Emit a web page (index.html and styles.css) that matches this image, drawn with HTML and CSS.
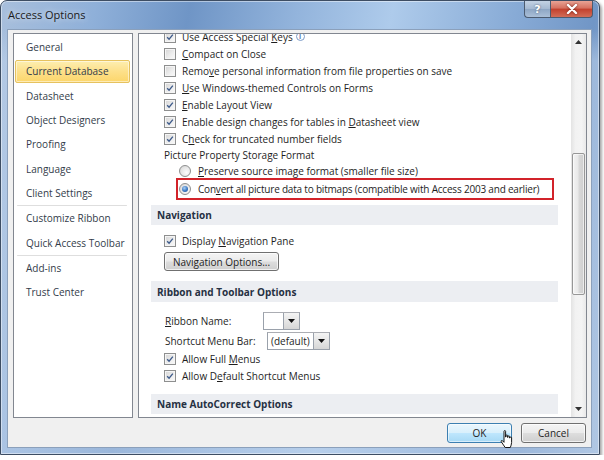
FILE: index.html
```html
<!DOCTYPE html>
<html>
<head>
<meta charset="utf-8">
<title>Access Options</title>
<link rel="stylesheet" href="styles.css">
</head>
<body>
<div class="window">
  <div class="titlebar">
    <span class="title">Access Options</span>
    <div class="caption-btns">
      <div class="cap help">?</div>
      <div class="cap close">
        <svg width="12" height="10" viewBox="0 0 12 10"><path d="M2 1 L10 9 M10 1 L2 9" stroke="#fff" stroke-width="2.4" stroke-linecap="round"/></svg>
      </div>
    </div>
  </div>
  <div class="client">
    <div class="main">
      <ul class="nav">
        <li>General</li>
        <li class="sel">Current Database</li>
        <li>Datasheet</li>
        <li>Object Designers</li>
        <li>Proofing</li>
        <li>Language</li>
        <li>Client Settings</li>
        <li class="sep"></li>
        <li>Customize Ribbon</li>
        <li>Quick Access Toolbar</li>
        <li class="sep"></li>
        <li>Add-ins</li>
        <li>Trust Center</li>
      </ul>
      <div class="panel">
        <div class="scroll">
          <div class="inner">
            <div class="row"><span class="cb on"><svg viewBox="0 0 12 12"><path d="M2.6 6.2 L4.9 8.6 L9.4 3.2"/></svg></span><span>Use Access Special <u>K</u>eys</span><span class="info">i</span></div>
            <div class="row"><span class="cb"></span><span><u>C</u>ompact on Close</span></div>
            <div class="row"><span class="cb"></span><span>Remo<u>v</u>e personal information from file properties on save</span></div>
            <div class="row"><span class="cb on"><svg viewBox="0 0 12 12"><path d="M2.6 6.2 L4.9 8.6 L9.4 3.2"/></svg></span><span><u>U</u>se Windows-themed Controls on Forms</span></div>
            <div class="row"><span class="cb on"><svg viewBox="0 0 12 12"><path d="M2.6 6.2 L4.9 8.6 L9.4 3.2"/></svg></span><span><u>E</u>nable Layout View</span></div>
            <div class="row"><span class="cb on"><svg viewBox="0 0 12 12"><path d="M2.6 6.2 L4.9 8.6 L9.4 3.2"/></svg></span><span>Enable design changes for tables in <u>D</u>atasheet view</span></div>
            <div class="row"><span class="cb on"><svg viewBox="0 0 12 12"><path d="M2.6 6.2 L4.9 8.6 L9.4 3.2"/></svg></span><span>C<u>h</u>eck for truncated number fields</span></div>
            <div class="label">Picture Property Storage Format</div>
            <div class="row radio-row"><span class="rb"></span><span><u>P</u>reserve source image format (smaller file size)</span></div>
            <div class="highlight">
              <div class="row radio-row in-box"><span class="rb on"></span><span class="tight">Con<u>v</u>ert all picture data to bitmaps (compatible with Access 2003 and earlier)</span></div>
            </div>

            <div class="section nav-sec">Navigation</div>
            <div class="row sec-first"><span class="cb on"><svg viewBox="0 0 12 12"><path d="M2.6 6.2 L4.9 8.6 L9.4 3.2"/></svg></span><span>Display <u>N</u>avigation Pane</span></div>
            <button class="btn navopt">Navigation Options...</button>

            <div class="section ribbon-sec">Ribbon and Toolbar Options</div>
            <div class="combo-row first-combo">
              <span class="clabel rn"><u>R</u>ibbon Name:</span>
              <span class="combo"><span class="cfield narrow"></span><span class="cdrop"><svg width="7" height="4" viewBox="0 0 7 4"><path d="M0 0 H7 L3.5 4 Z" fill="#111"/></svg></span></span>
            </div>
            <div class="combo-row">
              <span class="clabel sm">Shortcut Menu Bar:</span>
              <span class="combo"><span class="cfield">(default)</span><span class="cdrop"><svg width="7" height="4" viewBox="0 0 7 4"><path d="M0 0 H7 L3.5 4 Z" fill="#111"/></svg></span></span>
            </div>
            <div class="row"><span class="cb on"><svg viewBox="0 0 12 12"><path d="M2.6 6.2 L4.9 8.6 L9.4 3.2"/></svg></span><span>Allow Full <u>M</u>enus</span></div>
            <div class="row"><span class="cb on"><svg viewBox="0 0 12 12"><path d="M2.6 6.2 L4.9 8.6 L9.4 3.2"/></svg></span><span>Allow D<u>e</u>fault Shortcut Menus</span></div>

            <div class="section auto-sec">Name AutoCorrect Options</div>
          </div>
        </div>
        <div class="vscroll">
          <div class="arrow"><svg width="7" height="4" viewBox="0 0 7 4"><path d="M0 4 H7 L3.5 0 Z" fill="#333"/></svg></div>
          <div class="track"><div class="thumb"></div></div>
          <div class="arrow"><svg width="7" height="4" viewBox="0 0 7 4"><path d="M0 0 H7 L3.5 4 Z" fill="#333"/></svg></div>
        </div>
      </div>
    </div>
    <div class="footer">
      <button class="btn default">OK</button>
      <button class="btn">Cancel</button>
      <svg class="cursor" width="14" height="19" viewBox="0 0 14 19">
        <path d="M4 1.3 C4 0.3 5.6 0.3 5.6 1.3 V7 H6 V5.6 C6 4.7 7.6 4.7 7.6 5.6 V7.4 H8 V6.5 C8 5.6 9.6 5.6 9.6 6.5 V8 H10 V7.6 C10 6.8 11.6 6.8 11.6 7.6 V12.5 C11.6 14.5 10.8 15.8 10.3 17.5 H5.2 L1.3 11.8 C0.7 10.9 1.8 10 2.6 10.8 L4 12.3 Z" fill="#fff" stroke="#000" stroke-width="0.9" stroke-linejoin="round"/>
      </svg>
    </div>
  </div>
</div>
</body>
</html>
```
FILE: styles.css
```css
* { box-sizing: border-box; }
html, body { margin: 0; padding: 0; background: #fff; }
body {
  font-family: "Open Sans", "Noto Sans", sans-serif;
  font-size: 10px;
  color: #1e1e1e;
}
u { text-decoration: underline; text-decoration-thickness: 1px; text-underline-offset: 1px; }

.window {
  width: 600px;
  height: 455px;
  border: 1px solid #3d4d63;
  border-radius: 7px 7px 0 0;
  padding: 0 7px 6px 6px;
  display: flex;
  flex-direction: column;
  background:
    linear-gradient(to bottom, rgba(255,255,255,0) 0, rgba(255,255,255,0) 28px, rgba(190,210,235,0.55) 60px),
    linear-gradient(100deg, #a8bfdc 0%, #8fb0d9 14%, #6f95c6 28%, #93b4dc 44%, #aecbeb 58%, #88abd6 76%, #7196c6 88%, #9fbadb 100%);
  box-shadow: 2px 2px 3px rgba(0,0,0,0.35), inset 0 0 0 1px rgba(255,255,255,0.45);
}

.titlebar {
  height: 28px;
  display: flex;
  align-items: flex-start;
}
.title {
  padding: 6px 0 0 1px;
  font-size: 11px;
  color: #1a1a1a;
  text-shadow: 0 0 6px rgba(255,255,255,0.8);
}
.caption-btns {
  margin-left: auto;
  display: flex;
  margin-right: -1px;
}
.cap {
  height: 17px;
  display: flex;
  align-items: center;
  justify-content: center;
  border: 1px solid #4c5b70;
  border-top: none;
}
.help {
  width: 26px;
  border-radius: 0 0 0 4px;
  border-right: none;
  background: linear-gradient(to bottom, #c3d2e4 0%, #a4b8d1 50%, #8ea6c4 51%, #aabfd8 100%);
  color: #fff;
  font-weight: bold;
  font-size: 11px;
  font-family: "DejaVu Sans", sans-serif;
  text-shadow: 0 0 2px #3d4f69;
}
.close {
  width: 43px;
  border-radius: 0 0 4px 0;
  background: linear-gradient(to bottom, #e8a395 0%, #d5705f 45%, #c2402d 50%, #d26d58 100%);
}
.close svg { filter: drop-shadow(0 0 1px #6b1a10); }

.client {
  flex: 1;
  background: #f0f0f0;
  border: 1px solid #8ba0bb;
  display: flex;
  flex-direction: column;
  padding: 3px 4px 0 5px;
}
.main {
  display: flex;
  gap: 5px;
  height: 385px;
}

.nav {
  list-style: none;
  margin: 0;
  padding: 1px 0 0 0;
  width: 120px;
  background: #fff;
  border: 1px solid #828790;
  color: #333c4a;
  display: flex;
  flex-direction: column;
}
.nav li {
  height: 22.33px;
  flex: none;
  margin: 1px 2px 1px 1px;
  border: 1px solid transparent;
  border-radius: 2px;
  padding-left: 10px;
  display: flex;
  align-items: center;
}
.nav li.sel {
  background: linear-gradient(to bottom, #fdeeb0 0%, #fde08a 50%, #fcd66b 100%);
  border-color: #e6c25e;
  box-shadow: inset 0 0 0 1px rgba(255,255,255,0.5);
}
.nav li.sep {
  height: 1px;
  margin: 0 5px 0 3px;
  border: none;
  padding: 0;
  background: #dedede;
}

.panel {
  flex: 1;
  background: #fff;
  border: 1px solid #828790;
  display: flex;
  overflow: hidden;
}
.scroll {
  flex: 1;
  overflow: hidden;
  padding: 0 13px 0 12px;
}
.inner {
  margin-top: -6px;
  display: flex;
  flex-direction: column;
}
.row {
  height: 17px;
  display: flex;
  align-items: center;
  padding-left: 13px;
  gap: 6px;
  white-space: nowrap;
}
.cb {
  width: 12px;
  height: 12px;
  flex: none;
  border: 1px solid #8e8f8f;
  background: linear-gradient(135deg, #d4d4d4 0%, #ececec 55%, #fbfbfb 100%);
  box-shadow: inset 0 0 0 1px #f5f5f5;
  display: flex;
}
.cb svg { width: 10px; height: 10px; }
.cb svg path { fill: none; stroke: #3d5a8a; stroke-width: 1.6; }
.info {
  width: 9px;
  height: 9px;
  border: 1px solid #7d9cc8;
  border-radius: 50%;
  font-size: 7px;
  line-height: 7px;
  text-align: center;
  color: #5b7db0;
  margin-left: -3px;
  font-weight: bold;
}
.label {
  height: 16px;
  display: flex;
  align-items: center;
  padding-left: 13px;
}
.radio-row { height: 15px; padding-left: 28px; gap: 7px; }
.rb {
  width: 12px;
  height: 12px;
  flex: none;
  border-radius: 50%;
  border: 1px solid #8e8f8f;
  background: radial-gradient(circle at 65% 65%, #fdfdfd 0%, #e4e4e4 60%, #cfcfcf 100%);
  display: flex;
  align-items: center;
  justify-content: center;
}
.rb.on::after {
  content: "";
  width: 6px;
  height: 6px;
  border-radius: 50%;
  background: radial-gradient(circle at 40% 35%, #a9d0f5 0%, #3b78c2 55%, #1f4f8f 100%);
}
.highlight {
  height: 22px;
  width: 378px;
  margin-left: 25px;
  border: 2px solid #d2232a;
  display: flex;
  align-items: center;
}
.radio-row.in-box { padding-left: 1px; height: 18px; }
.tight { letter-spacing: -0.2px; }

.section {
  height: 20px;
  background: #eceef2;
  font-weight: bold;
  color: #263143;
  display: flex;
  align-items: center;
  padding-left: 6px;
}
.nav-sec { margin-top: 5px; }
.sec-first { margin-top: 7px; }
.ribbon-sec { margin-top: 10px; height: 21px; }
.auto-sec { margin-top: 10px; }

.btn {
  font-family: "Open Sans", "Noto Sans", sans-serif;
  font-size: 10px;
  color: #1e1e1e;
  border: 1px solid #707070;
  border-radius: 3px;
  background: linear-gradient(to bottom, #f4f4f4 0%, #ebebeb 48%, #dddddd 52%, #cfcfcf 100%);
  box-shadow: inset 0 0 0 1px rgba(255,255,255,0.7);
  padding: 0;
}
.navopt {
  margin: 3px 0 0 13px;
  width: 115px;
  height: 19px;
}
.combo-row {
  height: 18px;
  display: flex;
  align-items: center;
  padding-left: 14px;
  margin-top: 2px;
}
.combo-row.first-combo { margin-top: 10px; }
.clabel { flex: none; }
.clabel.rn { width: 98px; }
.clabel.sm { width: 102px; }
.combo {
  display: flex;
  height: 18px;
  border: 1px solid #9aa1ab;
  border-top-color: #abadb3;
  background: #fff;
}
.cfield {
  padding: 0 3px;
  display: flex;
  align-items: center;
  min-width: 19px;
}
.cfield.narrow { width: 19px; }
.cdrop {
  width: 16px;
  border-left: 1px solid #9aa1ab;
  background: linear-gradient(to bottom, #f4f4f4 0%, #e6e6e6 50%, #d6d6d6 100%);
  display: flex;
  align-items: center;
  justify-content: center;
}

.vscroll {
  width: 15px;
  flex: none;
  background: linear-gradient(to right, #e3e3e3 0%, #f2f2f2 30%, #f4f4f4 70%, #e9e9e9 100%);
  display: flex;
  flex-direction: column;
}
.arrow {
  height: 16px;
  display: flex;
  align-items: center;
  justify-content: center;
}
.track { flex: 1; }
.thumb {
  margin: 103px 1px 0 1px;
  height: 142px;
  border: 1px solid #979797;
  border-radius: 2px;
  background: linear-gradient(to right, #f3f3f3 0%, #e9e9e9 45%, #d8d8d8 55%, #cfcfcf 100%);
  box-shadow: inset 0 0 0 1px rgba(255,255,255,0.6);
}

.footer {
  position: relative;
  display: flex;
  justify-content: flex-end;
  gap: 9px;
  margin-top: 5px;
  padding-right: 1px;
}
.footer .btn {
  width: 65px;
  height: 20px;
}
.footer .btn.default {
  border-color: #3c7fb1;
  background: linear-gradient(to bottom, #eaf6fd 0%, #d9f0fc 48%, #bee6fd 52%, #a7d9f5 100%);
  box-shadow: inset 0 0 0 1px rgba(255,255,255,0.55);
}
.cursor {
  position: absolute;
  left: 487px;
  top: 7px;
}
```
